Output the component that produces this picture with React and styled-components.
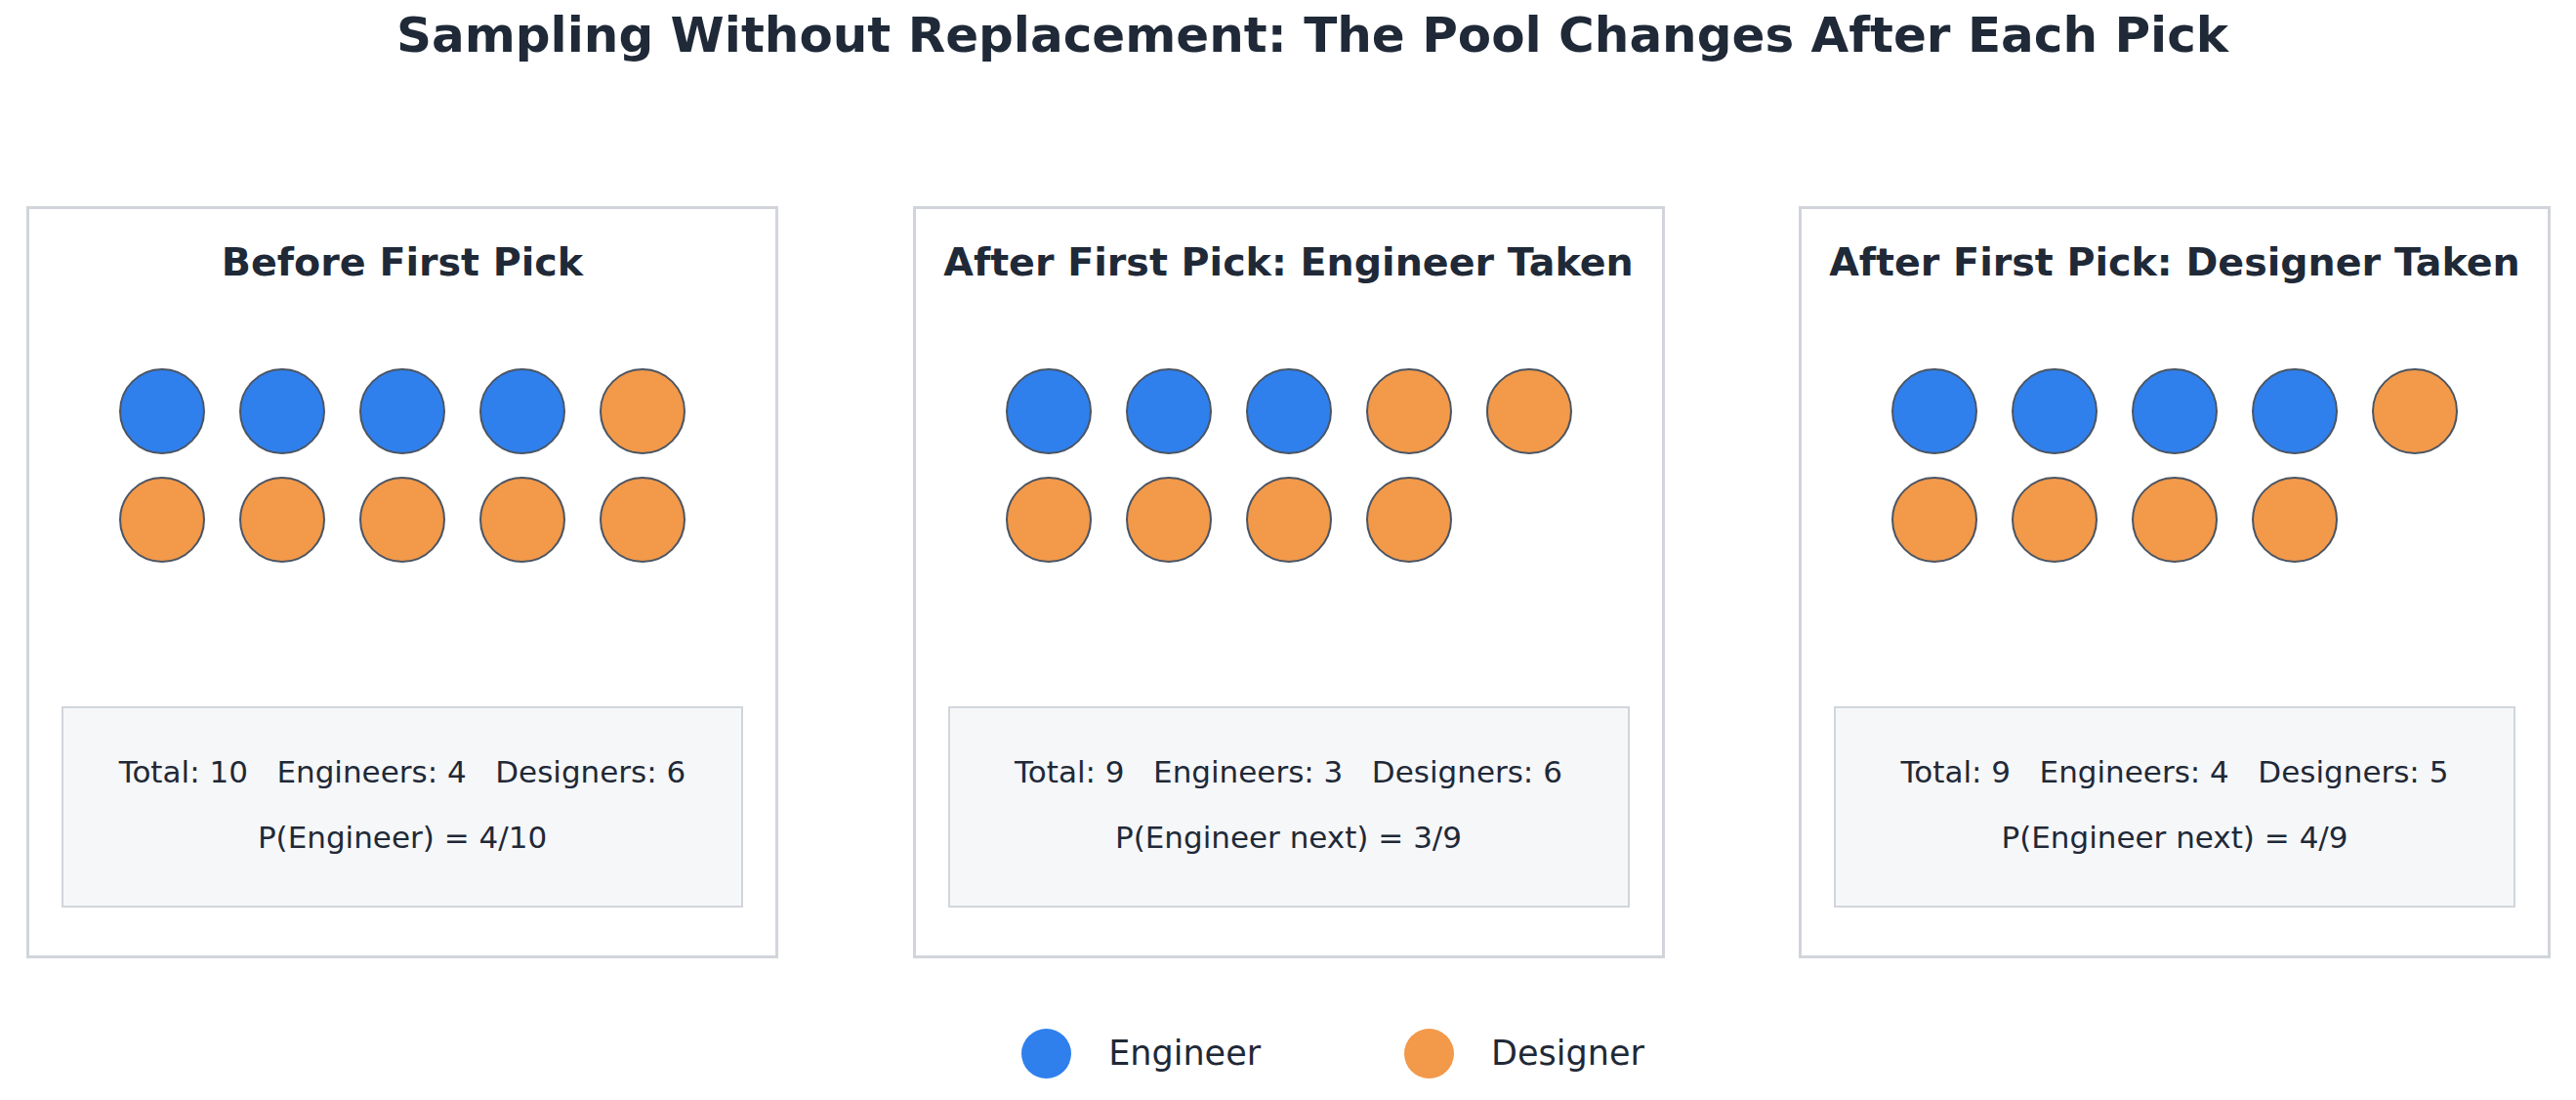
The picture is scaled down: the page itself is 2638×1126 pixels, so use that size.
import React from 'react'
import styled, { createGlobalStyle } from 'styled-components'

const GlobalStyle = createGlobalStyle`
  html, body {
    margin: 0;
    padding: 0;
    background: #ffffff;
  }
  body {
    font-family: "DejaVu Sans", "Liberation Sans", sans-serif;
    color: #1f2937;
  }
`

const ENGINEER = '#2f80ed'
const DESIGNER = '#f2994a'

// each pool state: title, counts and the probability line
const pools = [
  { title: 'Before First Pick', engineers: 4, designers: 6, prob: 'P(Engineer) = 4/10' },
  { title: 'After First Pick: Engineer Taken', engineers: 3, designers: 6, prob: 'P(Engineer next) = 3/9' },
  { title: 'After First Pick: Designer Taken', engineers: 4, designers: 5, prob: 'P(Engineer next) = 4/9' },
]

const Page = styled.div`
  width: 2638px;
  height: 1126px;
  display: flex;
  flex-direction: column;
  overflow: hidden;
`

const Title = styled.h1`
  margin: 0;
  padding: 6px 0 0 50px;
  font-size: 50px;
  line-height: 60px;
  font-weight: 700;
  text-align: center;
  color: #1f2937;
`

const PanelRow = styled.div`
  display: flex;
  gap: 137.5px;
  padding-left: 27px;
  margin-top: 145px;
`

const Panel = styled.section`
  box-sizing: border-box;
  width: 770px;
  height: 770px;
  border: 3px solid #d1d5db;
  display: flex;
  flex-direction: column;
  align-items: center;
  padding: 31px 0 49px;
`

const PanelTitle = styled.h2`
  margin: 0;
  font-size: 39.6px;
  line-height: 46px;
  font-weight: 700;
  color: #1f2937;
  white-space: nowrap;
`

const Pool = styled.div`
  display: grid;
  grid-template-columns: repeat(5, 88px);
  column-gap: 35px;
  row-gap: 23px;
  margin-top: 86px;
`

const Ball = styled.div`
  box-sizing: border-box;
  width: 88px;
  height: 88px;
  border-radius: 50%;
  border: 2px solid #4b5563;
  background: ${(props) => props.color};
`

const StatsBox = styled.div`
  box-sizing: border-box;
  width: 698px;
  height: 206px;
  margin-top: auto;
  border: 2px solid #d1d5db;
  background: #f6f7f9;
  padding-top: 47px;
  display: flex;
  flex-direction: column;
  align-items: center;
  gap: 31px;
`

const StatLine = styled.div`
  font-size: 31px;
  line-height: 36px;
  white-space: pre;
  color: #1f2937;
`

const Legend = styled.div`
  display: flex;
  justify-content: center;
  align-items: center;
  padding-left: 92px;
  margin-top: 72px;
`

const LegendItem = styled.div`
  display: flex;
  align-items: center;
  gap: 38px;
  & + & {
    margin-left: 147px;
  }
`

const Swatch = styled.div`
  width: 51px;
  height: 51px;
  border-radius: 50%;
  background: ${(props) => props.color};
`

const LegendLabel = styled.span`
  font-size: 35px;
  line-height: 41px;
  color: #1f2937;
`

function PoolPanel({ pool }) {
  const balls = [
    ...Array(pool.engineers).fill(ENGINEER),
    ...Array(pool.designers).fill(DESIGNER),
  ]
  const total = pool.engineers + pool.designers
  return (
    <Panel>
      <PanelTitle>{pool.title}</PanelTitle>
      <Pool>
        {balls.map((c, i) => (
          <Ball key={i} color={c} />
        ))}
      </Pool>
      <StatsBox>
        <StatLine>{`Total: ${total}   Engineers: ${pool.engineers}   Designers: ${pool.designers}`}</StatLine>
        <StatLine>{pool.prob}</StatLine>
      </StatsBox>
    </Panel>
  )
}

export default function App() {
  return (
    <>
      <GlobalStyle />
      <Page>
        <Title>Sampling Without Replacement: The Pool Changes After Each Pick</Title>
        <PanelRow>
          {pools.map((p) => (
            <PoolPanel key={p.title} pool={p} />
          ))}
        </PanelRow>
        <Legend>
          <LegendItem>
            <Swatch color={ENGINEER} />
            <LegendLabel>Engineer</LegendLabel>
          </LegendItem>
          <LegendItem>
            <Swatch color={DESIGNER} />
            <LegendLabel>Designer</LegendLabel>
          </LegendItem>
        </Legend>
      </Page>
    </>
  )
}
